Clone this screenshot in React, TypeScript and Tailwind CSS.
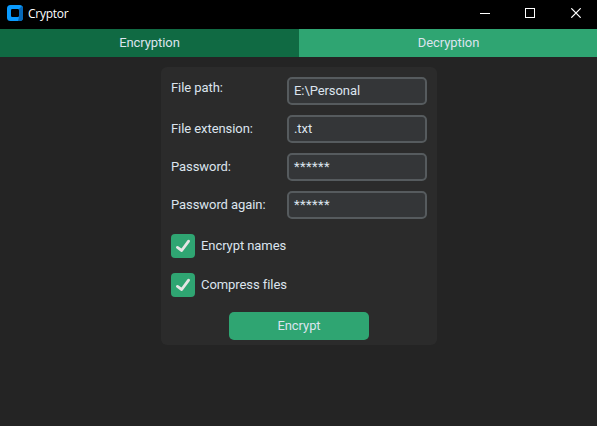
import React from "react";

const fields = [
  { label: "File path:", value: "E:\\Personal", offset: "pb-[7px]", spacing: "" },
  { label: "File extension:", value: ".txt", offset: "pb-px", spacing: "" },
  { label: "Password:", value: "******", offset: "pb-px", spacing: "tracking-[0.4px]" },
  { label: "Password again:", value: "******", offset: "pb-px", spacing: "tracking-[0.4px]" },
];

function AppLogo() {
  return (
    <svg width="16" height="16" viewBox="0 0 16 16">
      <rect width="16" height="16" rx="3.5" fill="#0a9bff" />
      <path d="M12 4 15 1Q16 2 16 3.5v9Q16 16 12.5 16H11l1-4z" fill="#0668b8" />
      <rect x="4" y="4" width="8" height="8" rx="1.2" fill="#000" />
    </svg>
  );
}

function TitleBar() {
  return (
    <header className="flex h-[29px] shrink-0 items-center bg-black pr-4 pl-[7px] text-white">
      <div className="-mt-[3px]">
        <AppLogo />
      </div>
      <h1 className="ml-[5px] grow pb-px font-['Open_Sans',sans-serif] text-[12px] leading-4 tracking-[-0.25px]">Cryptor</h1>
      <svg width="101" height="10" viewBox="0 0 101 10" className="mb-[3px]" fill="none" stroke="#fff">
        <path d="M0 5.5h10" shapeRendering="crispEdges" />
        <rect x="45.5" y="0.5" width="9" height="9" shapeRendering="crispEdges" />
        <path d="m91.3.3 9.4 9.4m0-9.4-9.4 9.4" strokeWidth="1.2" />
      </svg>
    </header>
  );
}

function CheckOption({ label }: { label: string }) {
  return (
    <div className="flex h-6 items-center gap-1.5">
      <span className="size-6 rounded-[4px] bg-[#2fa572]">
        <svg width="24" height="24" viewBox="0 0 24 24" fill="none" stroke="#e5e5e5" strokeWidth="2.8">
          <path d="m6.4 13.4 4.3 3.1 6.9-9.3" strokeLinecap="round" strokeLinejoin="round" />
        </svg>
      </span>
      <span className="pb-px">{label}</span>
    </div>
  );
}

export default function App() {
  return (
    <div className="flex h-screen w-full flex-col overflow-hidden bg-[#242424] font-[Roboto,sans-serif] text-[13px] leading-[15px] tracking-[-0.07px] text-[#dce4ee]">
      <TitleBar />
      <nav className="flex h-7 shrink-0">
        <button className="w-[299px] bg-[#106a43] pb-px">Encryption</button>
        <button className="grow bg-[#2fa572] pb-px pl-px">Decryption</button>
      </nav>
      <main className="mt-2.5 ml-[161px] flex h-[278px] w-[276px] flex-col rounded-[6px] bg-[#2b2b2b] px-2.5 pt-2.5">
        <div className="flex flex-col gap-2.5">
          {fields.map((field) => (
            <div key={field.label} className="flex h-7 items-center">
              <span className={"w-[116px] " + field.offset}>{field.label}</span>
              <div className="flex h-7 w-[140px] items-center rounded-[5px] border-2 border-[#565b5e] bg-[#343638] pb-px pl-[5px]">
                <span className={field.spacing}>{field.value}</span>
              </div>
            </div>
          ))}
        </div>
        <div className="mt-[15px] flex flex-col gap-[15px]">
          <CheckOption label="Encrypt names" />
          <CheckOption label="Compress files" />
        </div>
        <button className="mt-[15px] ml-[58px] h-7 w-[140px] rounded-[5px] bg-[#2fa572] pb-px">Encrypt</button>
      </main>
    </div>
  );
}
